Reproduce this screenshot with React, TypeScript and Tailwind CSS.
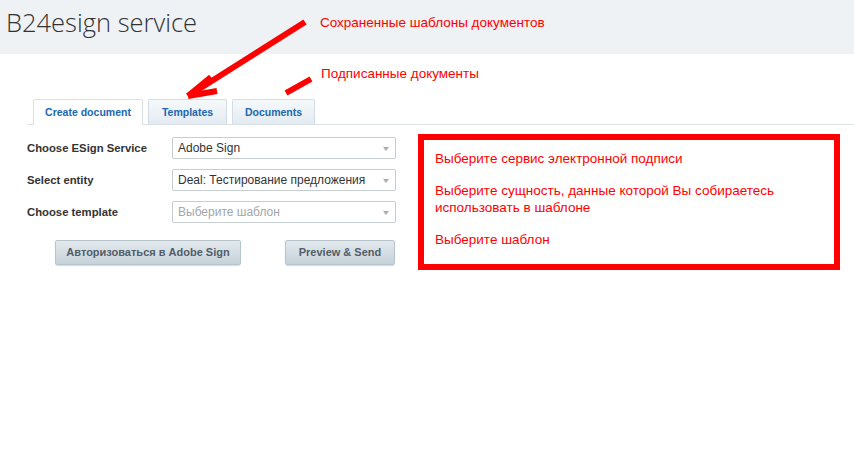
import React from 'react';

const FORM_ROWS = [
  { label: 'Choose ESign Service', value: 'Adobe Sign', placeholder: false },
  { label: 'Select entity', value: 'Deal: Тестирование предложения', placeholder: false },
  { label: 'Choose template', value: 'Выберите шаблон', placeholder: true },
];

const HINTS = [
  'Выберите сервис электронной подписи',
  'Выберите сущность, данные которой Вы собираетесь использовать в шаблоне',
  'Выберите шаблон',
];

const TABS = [
  { name: 'Create document', width: 'w-[110px]' },
  { name: 'Templates', width: 'w-[79px]' },
  { name: 'Documents', width: 'w-[83px]' },
];

const SelectBox = ({ value, placeholder }: { value: string; placeholder: boolean }) => (
  <div className="relative flex h-[22px] w-[224px] items-center rounded-[2px] border border-[#c6cdd3] bg-white pl-[5px]">
    <span className={`text-[12px] leading-none ${placeholder ? 'text-[#a1a6ac]' : 'text-[#333]'}`}>{value}</span>
    {/* small dropdown triangle */}
    <span className="absolute right-[6px] top-[9px] h-0 w-0 border-x-[3px] border-t-[4px] border-x-transparent border-t-[#a8adb2]" />
  </div>
);

export default function App() {
  return (
    <div className="relative min-h-[455px] w-[854px] overflow-hidden bg-white font-['Liberation_Sans',Arial,sans-serif]">
      {/* Header */}
      <div className="flex h-[54px] items-center bg-[#eef2f4] pb-[8px]">
        <h1 className="w-[320px] pl-[6px] font-['Open_Sans',sans-serif] text-[25.5px] font-light leading-none text-[#333]">
          B24esign service
        </h1>
        <span className="text-[13.5px] text-[#ff0000]">Сохраненные шаблоны документов</span>
      </div>

      {/* second annotation */}
      <div className="h-[46px] pl-[321px] pt-[11px] text-[13.5px] leading-[17px] text-[#ff0000]">
        Подписанные документы
      </div>

      {/* Tabs */}
      <div className="ml-[27px] flex h-[25px] items-end gap-[5px] border-b border-[#d9e0e6] pl-[6px]">
        {TABS.map((tab, i) => (
          <div
            key={tab.name}
            className={`flex items-center justify-center whitespace-nowrap rounded-t-[2px] border border-b-0 pt-[1px] text-[10.5px] font-bold text-[#2067b0] ${tab.width} ${
              i === 0
                ? 'mb-[-1px] h-[26px] border-[#d9e0e6] bg-white'
                : 'h-[25px] border-[#d3dde6] bg-gradient-to-b from-[#f6f9fb] to-[#e3ebf2]'
            }`}
          >
            {tab.name}
          </div>
        ))}
      </div>

      {/* Content */}
      <div className="flex items-start gap-[22px] pl-[27px] pt-[9px]">
        <div className="flex w-[369px] flex-col pt-[3px]">
          <div className="flex flex-col gap-[10px]">
            {FORM_ROWS.map((row) => (
              <div key={row.label} className="flex items-center">
                <div className="w-[145px] text-[11.3px] font-bold text-[#333]">{row.label}</div>
                <SelectBox value={row.value} placeholder={row.placeholder} />
              </div>
            ))}
          </div>
          <div className="mt-[17px] flex gap-[44px] pl-[28px]">
            <button className="h-[25px] w-[186px] rounded-[2px] border border-[#b8c4cb] bg-gradient-to-b from-[#e2e9ed] to-[#c6d2d9] text-[11px] font-bold text-[#535c69] shadow-[0_1px_1px_rgba(0,0,0,0.15)]">
              Авторизоваться в Adobe Sign
            </button>
            <button className="h-[25px] w-[110px] rounded-[2px] border border-[#b8c4cb] bg-gradient-to-b from-[#e2e9ed] to-[#c6d2d9] text-[11px] font-bold text-[#535c69] shadow-[0_1px_1px_rgba(0,0,0,0.15)]">
              Preview &amp; Send
            </button>
          </div>
        </div>

        <div className="h-[136px] w-[422px] border-[6px] border-[#ff0000] bg-white pl-[11px] pr-[20px] pt-[10px]">
          {HINTS.map((hint) => (
            <p key={hint} className="mb-[15px] text-[13.5px] leading-[17px] text-[#ff0000]">
              {hint}
            </p>
          ))}
        </div>
      </div>

      {/* annotation arrows drawn over the page */}
      <svg className="pointer-events-none absolute left-0 top-0" width="854" height="130" viewBox="0 0 854 130">
        <g stroke="#ff0000" strokeWidth="6" strokeLinecap="butt" fill="none">
          <line x1="305" y1="22" x2="188" y2="96" />
          <line x1="188" y1="96" x2="211" y2="77" />
          <line x1="188" y1="96" x2="217" y2="91" />
          <line x1="286" y1="93" x2="311" y2="79" />
        </g>
      </svg>
    </div>
  );
}
